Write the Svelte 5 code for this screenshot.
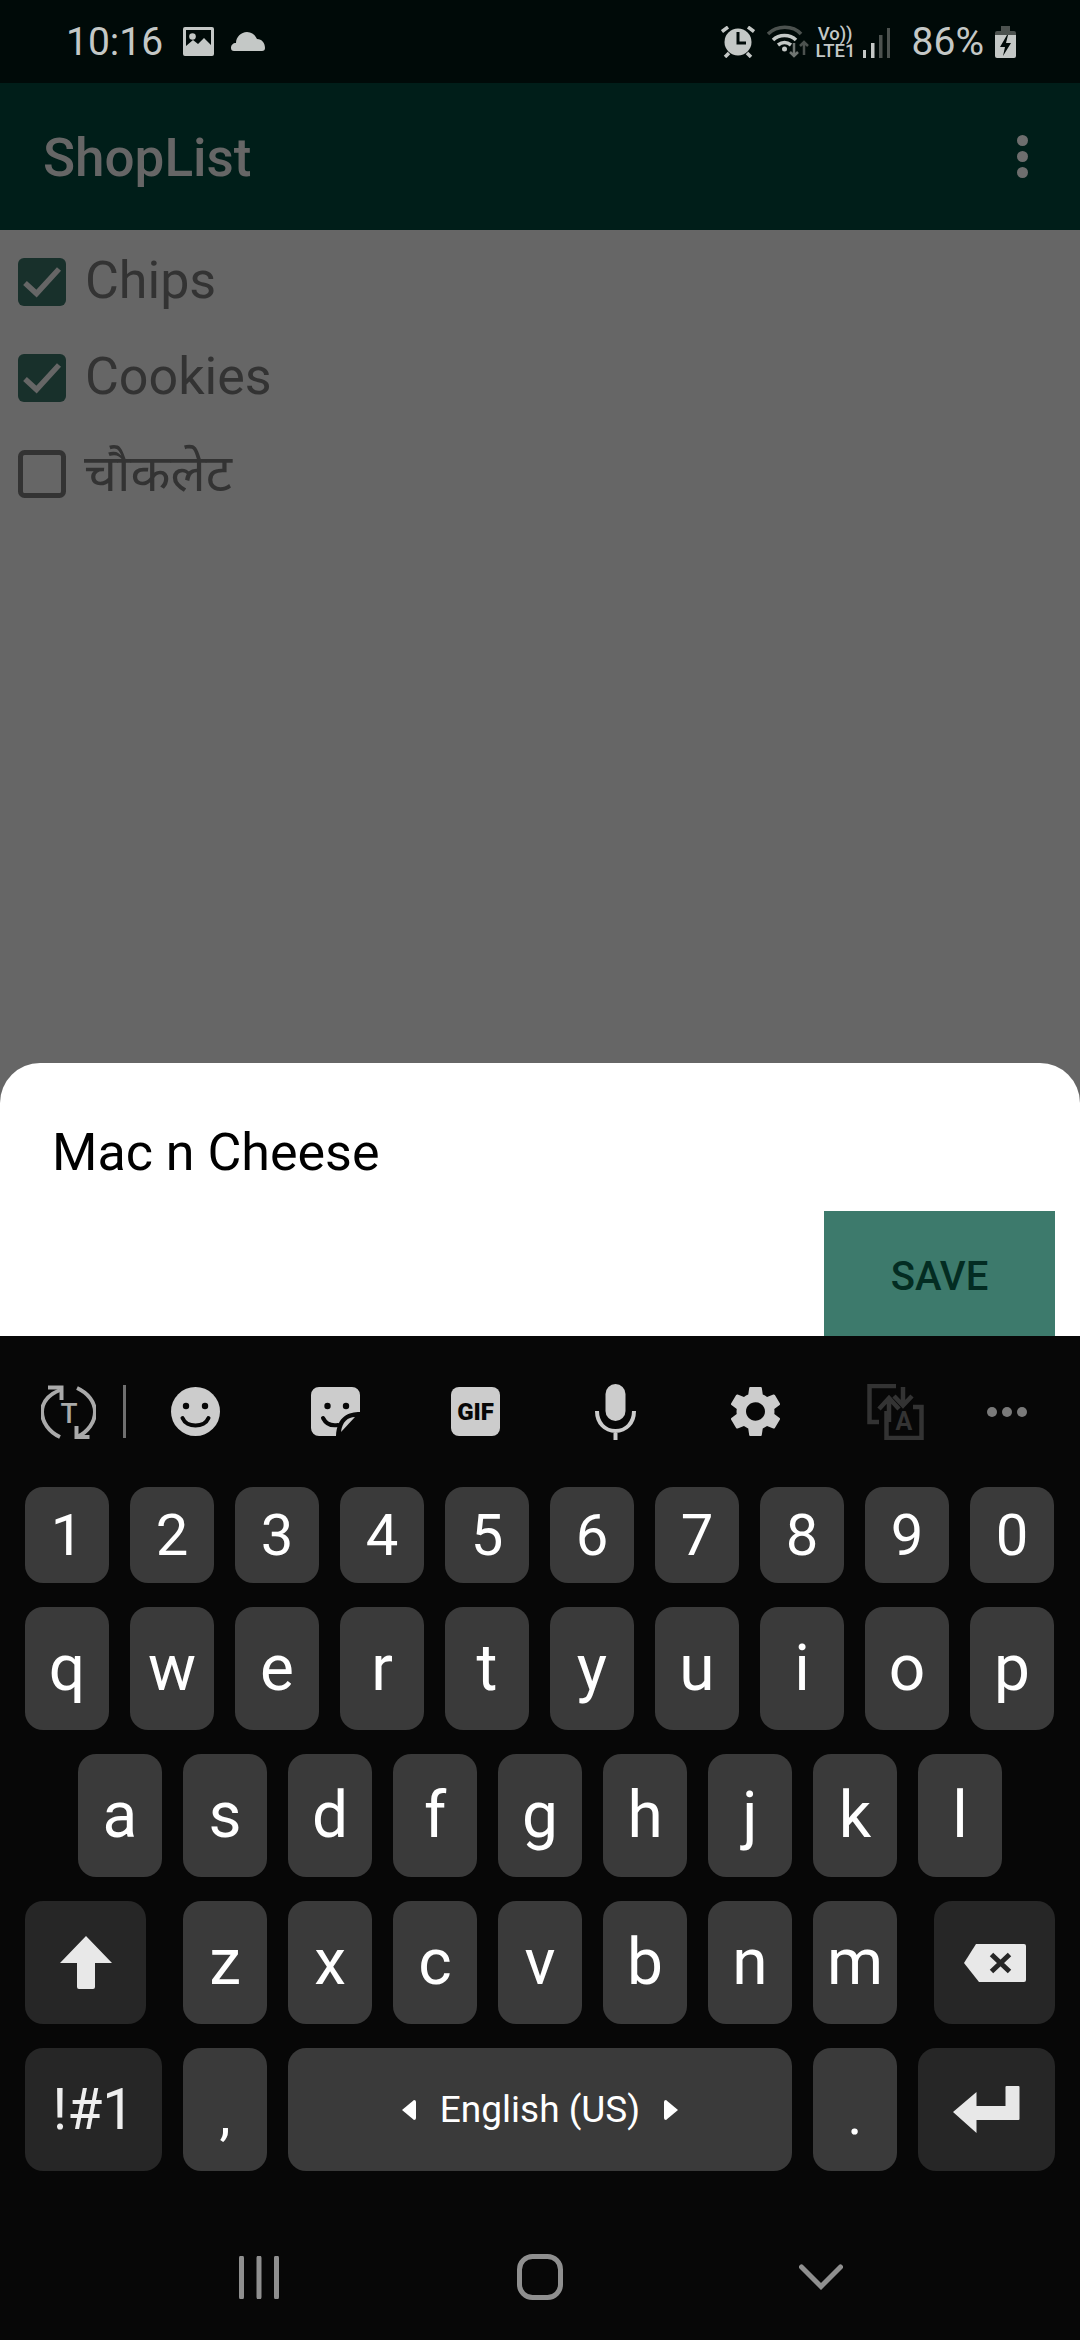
<script>
	const digits = ['1', '2', '3', '4', '5', '6', '7', '8', '9', '0'];
	const topRow = ['q', 'w', 'e', 'r', 't', 'y', 'u', 'i', 'o', 'p'];
	const midRow = ['a', 's', 'd', 'f', 'g', 'h', 'j', 'k', 'l'];
	const lowRow = ['z', 'x', 'c', 'v', 'b', 'n', 'm'];
	const items = [
		{ name: 'Chips', done: true },
		{ name: 'Cookies', done: true },
		{ name: 'चौकलेट', done: false }
	];
</script>

<div class="phone">
	<div class="status">
		<div class="status-left">
			<span class="clock">10:16</span>
			<svg class="ic-image" width="31" height="29" viewBox="0 0 31 29">
				<path fill-rule="evenodd" d="M2 0h27a2 2 0 0 1 2 2v25a2 2 0 0 1-2 2H2a2 2 0 0 1-2-2V2a2 2 0 0 1 2-2zM3 3v16l7-6 5 4 6-6 7 7V3z" />
				<circle cx="9.5" cy="9.5" r="3.3" />
			</svg>
			<svg class="ic-cloud" width="34" height="19" viewBox="0 0 34 19">
				<path d="M3 19a3 3 0 0 1-3-3c0-3 2-5 5-5 0-6 5-11 11-11 5 0 8 3 10 7 5 0 8 4 8 9a3 3 0 0 1-3 3z" />
			</svg>
		</div>
		<div class="status-right">
			<svg class="ic-alarm" width="34" height="32" viewBox="0 0 34 32">
				<circle cx="17" cy="16" r="13.5" />
				<path class="thin" d="M1 5.5l6-4.500M33 5.5l-6-4.500M4 31l4-4M30 31l-4-4" />
				<path class="hand" d="M17 6v11h8" />
			</svg>
			<svg class="ic-wifi" width="42" height="33" viewBox="0 0 42 33">
				<path class="arc dim" d="M1 9C10 0 26 0 34 9" />
				<path class="arc" d="M6 15c6-6 17-6 23 0" />
				<path class="arc" d="M11 20c4-3 9-3 13 0" />
				<circle cx="17.5" cy="24" r="2.5" />
				<path class="arrow dim" d="M27 18v13M23 27l4 4 4-4" />
				<path class="arrow dim2" d="M37 30V17M33 21l4-4 4 4" />
			</svg>
			<div class="volte">
				<span>Vo))</span>
				<span>LTE1</span>
			</div>
			<svg class="ic-signal" width="27" height="30" viewBox="0 0 27 30">
				<rect x="0" y="22" width="3" height="8" />
				<rect x="8" y="15" width="3.5" height="15" />
				<rect class="dim-fill" x="16" y="7" width="3.5" height="23" />
				<rect class="dim-fill" x="24" y="0" width="3" height="30" />
			</svg>
			<span class="percent">86%</span>
			<svg class="ic-battery" width="21" height="32" viewBox="0 0 21 32">
				<path class="dim-fill" d="M6 0h9v5h4a2 2 0 0 1 2 2v4H0V7a2 2 0 0 1 2-2h4z" />
				<path d="M0 9h21v21a2 2 0 0 1-2 2H2a2 2 0 0 1-2-2z" />
				<path class="bolt" d="M12 9L5 21h5l-2 9 8-13h-5l2-8z" />
			</svg>
		</div>
	</div>

	<header class="appbar">
		<span class="title">ShopList</span>
		<div class="overflow">
			<i></i><i></i><i></i>
		</div>
	</header>

	<main class="list">
		{#each items as item}
			<div class="row">
				{#if item.done}
					<svg class="box" width="48" height="48" viewBox="0 0 48 48">
						<rect width="48" height="48" rx="6" fill="#18302b" />
						<path d="M7 25l11.500 10.500L41 11" fill="none" stroke="#666" stroke-width="5.5" />
					</svg>
					<span>{item.name}</span>
				{:else}
					<svg class="box" width="48" height="48" viewBox="0 0 48 48">
						<rect x="2.5" y="2.5" width="43" height="43" rx="4" fill="none" stroke="#333" stroke-width="5" />
					</svg>
					<span class="hindi">{item.name}</span>
				{/if}
			</div>
		{/each}
	</main>

	<section class="sheet">
		<div class="entry">Mac n Cheese</div>
		<div class="actions">
			<button class="save">SAVE</button>
		</div>
	</section>

	<section class="keyboard">
		<div class="toolbar">
			<div class="tool-mode">
				<svg width="55" height="54" viewBox="0 0 55 54">
					<g fill="none" stroke="#aaa" stroke-width="4">
						<path d="M19 5C7 10 1 18 1 27c0 10 7 20 18 25" />
						<path d="M7 2.500h13.500V15" />
						<path d="M36 3c11 5 18 14 18 24 0 10-7 20-18 25" />
						<path d="M48.500 52H35.500V41" />
					</g>
					<text x="28" y="38" class="mode-t">T</text>
				</svg>
				<span class="divider"></span>
			</div>
			<div class="tool">
				<svg width="49" height="49" viewBox="0 0 49 49">
					<circle cx="24.5" cy="24.5" r="24.5" fill="#ccc" />
					<circle cx="15" cy="19" r="3.2" fill="#070707" />
					<circle cx="34" cy="19" r="3.2" fill="#070707" />
					<path d="M11.500 31c4 10 22 10 26 0" fill="none" stroke="#070707" stroke-width="4" stroke-linecap="round" />
				</svg>
			</div>
			<div class="tool">
				<svg width="49" height="49" viewBox="0 0 49 49">
					<path d="M8 0h33a8 8 0 0 1 8 8v17C38 25 26 29 25 49H8a8 8 0 0 1-8-8V8a8 8 0 0 1 8-8z" fill="#ccc" />
					<path d="M44 30C37 30 31 35 30 45z" fill="#ccc" />
					<circle cx="16.500" cy="19" r="3.2" fill="#070707" />
					<circle cx="35" cy="19" r="3.2" fill="#070707" />
					<path d="M12 31c3 6 9 8 15 7" fill="none" stroke="#070707" stroke-width="4" stroke-linecap="round" />
				</svg>
			</div>
			<div class="tool">
				<svg width="49" height="49" viewBox="0 0 49 49">
					<rect width="49" height="49" rx="8" fill="#ccc" />
					<text x="24.5" y="33" class="gif">GIF</text>
				</svg>
			</div>
			<div class="tool">
				<svg width="41" height="56" viewBox="0 0 41 56">
					<rect x="10.5" y="0" width="20" height="37" rx="10" fill="#ccc" />
					<path d="M2 27c0 12 8 20 18.500 20S39 39 39 27M20.500 47v9" fill="none" stroke="#ccc" stroke-width="4" />
				</svg>
			</div>
			<div class="tool">
				<svg width="49" height="51" viewBox="2.7 2 18.6 20" preserveAspectRatio="none">
					<path fill="#ccc" d="M19.14 12.94c.04-.3.06-.61.06-.94 0-.32-.02-.64-.07-.94l2.03-1.58c.18-.14.23-.41.12-.61l-1.92-3.32c-.12-.22-.37-.29-.59-.22l-2.39.96c-.5-.38-1.03-.7-1.62-.94l-.36-2.54c-.04-.24-.24-.41-.48-.41h-3.84c-.24 0-.43.17-.47.41l-.36 2.54c-.59.24-1.13.57-1.62.94l-2.39-.96c-.22-.08-.47 0-.59.22L2.74 8.87c-.12.21-.08.47.12.61l2.03 1.58c-.05.3-.09.63-.09.94s.02.64.07.94l-2.03 1.58c-.18.14-.23.41-.12.61l1.92 3.32c.12.22.37.29.59.22l2.39-.96c.5.38 1.03.7 1.62.94l.36 2.54c.05.24.24.41.48.41h3.84c.24 0 .44-.17.47-.41l.36-2.54c.59-.24 1.13-.56 1.62-.94l2.39.96c.22.08.47 0 .59-.22l1.92-3.32c.12-.22.07-.47-.12-.61l-2.01-1.58zM12 15.6c-1.98 0-3.6-1.62-3.6-3.6s1.62-3.6 3.6-3.6 3.6 1.62 3.6 3.6-1.62 3.6-3.6 3.6z" />
				</svg>
			</div>
			<div class="tool">
				<svg width="57" height="56" viewBox="0 0 57 56">
					<g fill="none" stroke="#333" stroke-width="4.5">
						<path d="M29 2H2.500v36H12" />
						<path d="M46 23h8.500v31H19.500V27" />
						<path d="M22 38V15M12 25l10-11 10 11" />
						<path d="M36 3v18M27 12l9 9.500 9-9.500" />
					</g>
					<text x="37" y="46" class="tr-a">A</text>
				</svg>
			</div>
			<div class="tool-more">
				<i></i><i></i><i></i>
			</div>
		</div>

		<div class="keys">
			<div class="key-row digits">
				{#each digits as d}
					<div class="key digit">{d}</div>
				{/each}
			</div>
			<div class="key-row">
				{#each topRow as k}
					<div class="key">{k}</div>
				{/each}
			</div>
			<div class="key-row mid">
				{#each midRow as k}
					<div class="key">{k}</div>
				{/each}
			</div>
			<div class="key-row">
				<div class="key fn wide">
					<svg width="52" height="53" viewBox="0 0 52 53">
						<path d="M26 0l26 27H35v24a2 2 0 0 1-2 2H19a2 2 0 0 1-2-2V27H0z" fill="#e8e8e8" />
					</svg>
				</div>
				<div class="low-keys">
					{#each lowRow as k}
						<div class="key">{k}</div>
					{/each}
				</div>
				<div class="key fn wide">
					<svg width="62" height="38" viewBox="0 0 62 38">
						<path d="M12 0h48a2 2 0 0 1 2 2v34a2 2 0 0 1-2 2H15L0 19z" fill="#e8e8e8" />
						<path d="M27.500 10.500l18 17M45.500 10.500l-18 17" stroke="#262626" stroke-width="5" />
					</svg>
				</div>
			</div>
			<div class="key-row">
				<div class="key fn sym">!#1</div>
				<div class="key punct">,</div>
				<div class="key space">
					<svg width="14" height="20" viewBox="0 0 14 20"><path d="M12 0a2 2 0 0 1 2 2v16a2 2 0 0 1-2 2L0 10z" fill="#fff" /></svg>
					<span>English (US)</span>
					<svg width="14" height="20" viewBox="0 0 14 20"><path d="M2 0a2 2 0 0 0-2 2v16a2 2 0 0 0 2 2l12-10z" fill="#fff" /></svg>
				</div>
				<div class="key punct">.</div>
				<div class="key fn sym">
					<svg width="67" height="47" viewBox="0 0 67 47">
						<path d="M0 26L23.500 6v14H52.500V1a1 1 0 0 1 1-1H65.500a1 1 0 0 1 1 1V33a1 1 0 0 1-1 1H23.500v13z" fill="#e8e8e8" />
					</svg>
				</div>
			</div>
		</div>

		<nav class="navbar">
			<div class="nav-item">
				<svg width="40" height="43" viewBox="0 0 40 43">
					<path d="M2.500 2v39M20 2v39M37.500 2v39" stroke="#8f8f8f" stroke-width="5" stroke-linecap="round" />
				</svg>
			</div>
			<div class="nav-item">
				<svg width="46" height="46" viewBox="0 0 46 46">
					<rect x="2.5" y="2.5" width="41" height="41" rx="13" fill="none" stroke="#8f8f8f" stroke-width="5" />
				</svg>
			</div>
			<div class="nav-item">
				<svg width="44" height="26" viewBox="0 0 44 26">
					<path d="M2.500 3L22 22.500 41.500 3" fill="none" stroke="#8f8f8f" stroke-width="5" stroke-linecap="round" />
				</svg>
			</div>
		</nav>
	</section>
</div>

<style>
	:global(body) {
		margin: 0;
		background: #666;
	}
	.phone {
		width: 1080px;
		height: 2340px;
		display: flex;
		flex-direction: column;
		overflow: hidden;
		font-family: Roboto, 'Noto Sans', sans-serif;
		background: #666;
	}

	/* status bar */
	.status {
		height: 83px;
		flex: none;
		display: flex;
		align-items: center;
		justify-content: space-between;
		background: #000a08;
		color: #c4c8c6;
		padding: 0 64px 0 66px;
		box-sizing: border-box;
	}
	.status svg {
		fill: #c4c8c6;
		display: block;
	}
	.status-left,
	.status-right {
		display: flex;
		align-items: center;
	}
	.clock {
		font-size: 39px;
		margin-right: 20px;
	}
	.ic-cloud {
		margin-left: 17px;
	}
	.status-right .thin {
		fill: none;
		stroke: #c4c8c6;
		stroke-width: 3.5;
	}
	.status-right .hand {
		fill: none;
		stroke: #000a08;
		stroke-width: 3;
	}
	.arc {
		fill: none;
		stroke: #c4c8c6;
		stroke-width: 3.5;
	}
	.arrow {
		fill: none;
		stroke-width: 2.5;
	}
	.status-right .arc.dim {
		stroke: #4c524f;
	}
	.status-right .arrow.dim {
		stroke: #6f7572;
	}
	.status-right .arrow.dim2 {
		stroke: #4c524f;
	}
	.status-right .dim-fill {
		fill: #4c524f;
	}
	.status-right .bolt {
		fill: #000a08;
	}
	.ic-wifi {
		margin-left: 12px;
	}
	.volte {
		display: flex;
		flex-direction: column;
		align-items: flex-end;
		width: 40px;
		margin-left: 7px;
		font-size: 18.5px;
		font-weight: 500;
		line-height: 17px;
		padding-top: 2px;
	}
	.volte span:first-child {
		margin-right: 3px;
	}
	.ic-signal {
		margin-left: 7px;
		margin-top: 3px;
	}
	.percent {
		font-size: 39px;
		margin-left: 22px;
	}
	.ic-battery {
		margin-left: 11px;
	}

	/* app bar */
	.appbar {
		height: 147px;
		flex: none;
		box-sizing: border-box;
		background: #001e19;
		display: flex;
		align-items: center;
		justify-content: space-between;
		padding: 0 52px 0 43px;
	}
	.title {
		font-size: 53px;
		font-weight: 500;
		color: #666;
		padding-top: 2px;
	}
	.overflow {
		display: flex;
		flex-direction: column;
		gap: 5px;
	}
	.overflow i {
		width: 11px;
		height: 11px;
		border-radius: 50%;
		background: #6e6e6e;
	}

	/* list */
	.list {
		flex: 1;
		padding-top: 4px;
		box-sizing: border-box;
	}
	.row {
		height: 96px;
		display: flex;
		align-items: center;
		padding-left: 18px;
		font-size: 52px;
		color: #333;
	}
	.row span {
		padding-bottom: 3px;
	}
	.row .hindi {
		padding-bottom: 7px;
		margin-left: -1px;
	}
	.box {
		margin-right: 19px;
		flex: none;
	}

	/* dialog sheet */
	.sheet {
		height: 273px;
		flex: none;
		background: #fff;
		border-radius: 40px 40px 0 0;
		overflow: hidden;
		box-sizing: border-box;
		padding-top: 57px;
	}
	.entry {
		font-size: 52px;
		line-height: 66px;
		color: #000;
		padding-left: 52px;
	}
	.actions {
		display: flex;
		justify-content: flex-end;
		padding: 25px 25px 0 0;
	}
	.save {
		width: 231px;
		height: 128px;
		border: 0;
		padding: 3px 0 0;
		background: #3d7a6c;
		color: #032c22;
		font-family: inherit;
		font-size: 40px;
		font-weight: 500;
	}

	/* keyboard */
	.keyboard {
		height: 1004px;
		flex: none;
		background: #070707;
		display: flex;
		flex-direction: column;
	}
	.toolbar {
		height: 151px;
		flex: none;
		display: grid;
		grid-template-columns: 125.4px repeat(6, 140px) 62px;
		align-items: center;
	}
	.tool-mode {
		display: flex;
		align-items: center;
		justify-content: flex-end;
		gap: 27px;
		margin-right: -1px;
	}
	.tool-mode svg {
		display: block;
	}
	.divider {
		width: 3px;
		height: 53px;
		background: #6f6f6f;
	}
	.tool {
		display: flex;
		justify-content: center;
		align-items: center;
	}
	.tool svg {
		display: block;
	}
	.mode-t {
		font-size: 28px;
		font-weight: 500;
		fill: #aaa;
		text-anchor: middle;
	}
	.gif {
		font-size: 24px;
		font-weight: 900;
		fill: #070707;
		text-anchor: middle;
	}
	.tr-a {
		font-size: 25px;
		font-weight: 700;
		fill: #333;
		text-anchor: middle;
	}
	.tool-more {
		display: flex;
		justify-content: flex-end;
		gap: 5px;
	}
	.tool-more i {
		width: 10px;
		height: 10px;
		border-radius: 50%;
		background: #7a7a7a;
	}

	.keys {
		display: flex;
		flex-direction: column;
		gap: 23.6px;
		padding: 0 26px 0 25px;
	}
	.key-row {
		display: flex;
		gap: 21px;
		height: 123.5px;
	}
	.key-row.digits {
		height: 96px;
	}
	.key-row.mid {
		padding: 0 53px;
	}
	.low-keys {
		display: flex;
		gap: 21px;
		margin: 0 16px;
	}
	.key {
		width: 84px;
		flex: none;
		display: flex;
		align-items: center;
		justify-content: center;
		background: #3a3a3a;
		border-radius: 18px;
		color: #fff;
		font-size: 64px;
	}
	.key.digit {
		font-size: 58px;
	}
	.key.fn {
		background: #262626;
		color: #eee;
	}
	.key.wide {
		width: 121px;
	}
	.key.sym {
		width: 137px;
		font-size: 57px;
	}
	.key.punct {
		font-size: 56px;
		padding-top: 11px;
		box-sizing: border-box;
	}
	.key.space {
		width: 504px;
		font-size: 37px;
		gap: 24px;
	}

	.navbar {
		flex: 1;
		display: grid;
		grid-template-columns: repeat(3, 281px);
		padding: 43px 118px 0;
		align-items: center;
	}
	.nav-item {
		display: flex;
		justify-content: center;
	}
	.nav-item svg {
		display: block;
	}
</style>
